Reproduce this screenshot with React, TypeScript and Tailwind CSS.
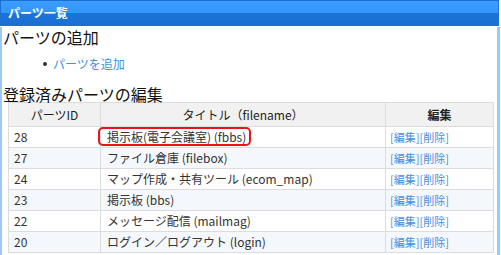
import React from "react";

const rows = [
  { id: "28", title: "掲示板(電子会議室) (fbbs)", mark: true },
  { id: "27", title: "ファイル倉庫 (filebox)" },
  { id: "24", title: "マップ作成・共有ツール (ecom_map)" },
  { id: "23", title: "掲示板 (bbs)" },
  { id: "22", title: "メッセージ配信 (mailmag)" },
  { id: "20", title: "ログイン／ログアウト (login)" },
];

const font = { fontFamily: "'Noto Sans CJK JP', 'Liberation Sans', sans-serif" };

export default function App() {
  return (
    <div className="w-[501px] h-[255px] overflow-hidden bg-white" style={font}>
      {/* Header */}
      <div className="w-[499px] h-[26px] border border-[#1f6fd0] bg-[linear-gradient(#3a9cff_0%,#3597fb_48%,#1c74d8_52%,#1a6fd2_100%)] pl-[7px] text-[12px] font-bold leading-[24px] text-white">
        パーツ一覧
      </div>

      {/* Body */}
      <div className="w-[500px] h-[240px] border-l-2 border-r-[3px] border-[#9cc9f7] pl-[1px]">
        <h2 className="mt-[1px] text-[16px] leading-[20px] text-[#111]">パーツの追加</h2>
        <div className="mt-[9px] flex h-[16px] items-center pl-[40px] text-[12px] leading-[16px]">
          <span className="mr-[6px] h-[4px] w-[4px] rounded-full bg-[#333]" />
          <a className="text-[#3f8fe0]">パーツを追加</a>
        </div>
        <h2 className="mt-[12px] text-[16px] leading-[20px] text-[#111]">登録済みパーツの編集</h2>

        <table className="ml-[5px] mt-[-2px] w-[486px] table-fixed border-collapse text-[12px] text-[#333]">
          <thead>
            <tr className="h-[24px] bg-[#f1f1f1] leading-[20px]">
              <th className="w-[92px] border border-[#dcdcdc] font-normal text-[#222]">パーツID</th>
              <th className="w-[285px] border border-[#dcdcdc] font-normal text-[#222]">タイトル（filename）</th>
              <th className="border border-[#dcdcdc] font-bold text-[#222]">編集</th>
            </tr>
          </thead>
          <tbody>
            {rows.map((r, i) => (
              <tr key={r.id} className={`h-[21px] leading-[18px] ${i % 2 === 1 ? "bg-[#f4f8fd]" : "bg-white"}`}>
                <td className="border border-[#dcdcdc] pl-[5px]">{r.id}</td>
                <td className="border border-[#dcdcdc] pl-[6px] whitespace-nowrap">
                  {r.mark ? (
                    <span className="relative">
                      {r.title}
                      <span className="absolute -left-[9px] -right-[5px] -top-[1px] -bottom-[1px] rounded-[5px] border-2 border-[#e8141a]" />
                    </span>
                  ) : (
                    r.title
                  )}
                </td>
                <td className="border border-[#dcdcdc] pl-[4px] text-[11px] text-[#3f8fe0]">[編集][削除]</td>
              </tr>
            ))}
          </tbody>
        </table>
      </div>
    </div>
  );
}
